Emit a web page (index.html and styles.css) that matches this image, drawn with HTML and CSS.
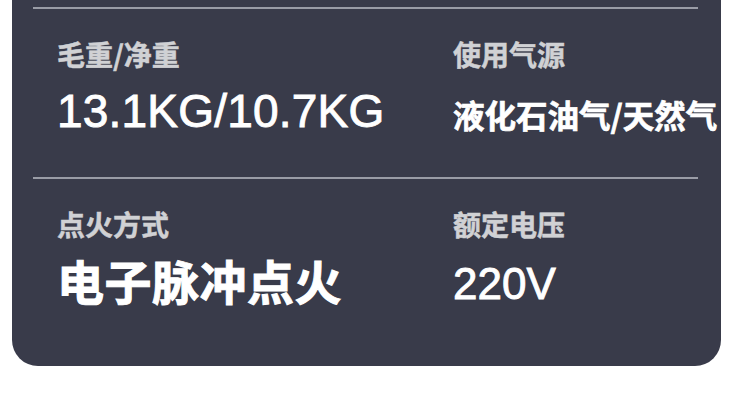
FILE: index.html
```html
<!DOCTYPE html>
<html lang="zh-CN">
<head>
<meta charset="utf-8">
<title>参数</title>
<link rel="stylesheet" href="styles.css">
</head>
<body>
<div class="card">
  <div class="divider"></div>
  <div class="row row-first">
    <div class="cell">
      <div class="label">毛重/净重</div>
      <div class="value num">13.1KG/10.7KG</div>
    </div>
    <div class="cell">
      <div class="label">使用气源</div>
      <div class="value cjk small">液化石油气/天然气</div>
    </div>
  </div>
  <div class="divider"></div>
  <div class="row row-last">
    <div class="cell">
      <div class="label">点火方式</div>
      <div class="value cjk big">电子脉冲点火</div>
    </div>
    <div class="cell">
      <div class="label">额定电压</div>
      <div class="value num num-right">220V</div>
    </div>
  </div>
</div>
</body>
</html>
```
FILE: styles.css
```css
html, body {
  margin: 0;
  padding: 0;
  background: #ffffff;
}
body {
  width: 750px;
  height: 404px;
  overflow: hidden;
  font-family: "Noto Sans CJK SC", "Noto Sans", sans-serif;
}
.card {
  margin: 0 29px 0 12px;
  height: 366px;
  box-sizing: border-box;
  background: #393b4a;
  border-radius: 0 0 26px 26px;
  padding: 7px 23px 0 21px;
}
.divider {
  height: 2px;
  background: #9a9ca6;
}
.row {
  display: grid;
  grid-template-columns: 396px 1fr;
  padding-left: 24px;
  padding-top: 31px;
  box-sizing: border-box;
}
.row-first {
  height: 168px;
}
.row-last {
  height: 187px;
}
.label {
  font-size: 28px;
  line-height: 28px;
  font-weight: 700;
  color: #d0d1d4;
  white-space: nowrap;
  -webkit-text-stroke: 0.5px #d0d1d4;
}
.value {
  color: #ffffff;
  white-space: nowrap;
  line-height: 46px;
  height: 46px;
  margin-top: 20px;
}
.num {
  font-family: "Liberation Sans", Arial, sans-serif;
  font-size: 46px;
  font-weight: 400;
  -webkit-text-stroke: 0.9px #ffffff;
  letter-spacing: 0.2px;
}
.num-right {
  font-size: 44px;
  margin-top: 23px;
  letter-spacing: 0;
}
.cjk {
  font-weight: 700;
  -webkit-text-stroke: 0.7px #ffffff;
}
.cjk.small {
  font-size: 31.5px;
  margin-top: 23px;
}
.cjk.big {
  font-size: 47px;
  letter-spacing: 0.5px;
  margin-top: 19px;
  -webkit-text-stroke: 1px #ffffff;
}
```
